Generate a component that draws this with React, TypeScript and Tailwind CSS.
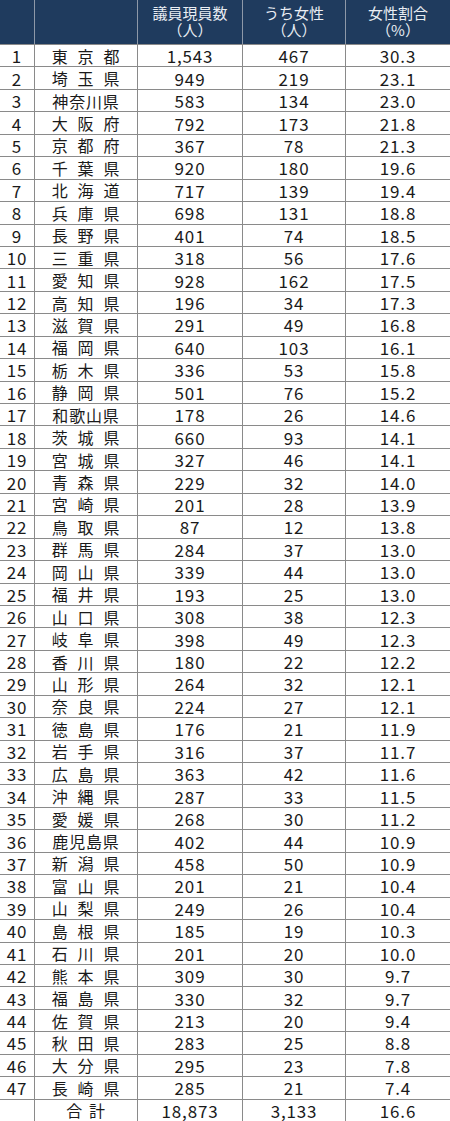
import React from "react"

type Row = [number, string, string, string, string]

const rows: Row[] = [
    [1, "東京都", "1,543", "467", "30.3"],
    [2, "埼玉県", "949", "219", "23.1"],
    [3, "神奈川県", "583", "134", "23.0"],
    [4, "大阪府", "792", "173", "21.8"],
    [5, "京都府", "367", "78", "21.3"],
    [6, "千葉県", "920", "180", "19.6"],
    [7, "北海道", "717", "139", "19.4"],
    [8, "兵庫県", "698", "131", "18.8"],
    [9, "長野県", "401", "74", "18.5"],
    [10, "三重県", "318", "56", "17.6"],
    [11, "愛知県", "928", "162", "17.5"],
    [12, "高知県", "196", "34", "17.3"],
    [13, "滋賀県", "291", "49", "16.8"],
    [14, "福岡県", "640", "103", "16.1"],
    [15, "栃木県", "336", "53", "15.8"],
    [16, "静岡県", "501", "76", "15.2"],
    [17, "和歌山県", "178", "26", "14.6"],
    [18, "茨城県", "660", "93", "14.1"],
    [19, "宮城県", "327", "46", "14.1"],
    [20, "青森県", "229", "32", "14.0"],
    [21, "宮崎県", "201", "28", "13.9"],
    [22, "鳥取県", "87", "12", "13.8"],
    [23, "群馬県", "284", "37", "13.0"],
    [24, "岡山県", "339", "44", "13.0"],
    [25, "福井県", "193", "25", "13.0"],
    [26, "山口県", "308", "38", "12.3"],
    [27, "岐阜県", "398", "49", "12.3"],
    [28, "香川県", "180", "22", "12.2"],
    [29, "山形県", "264", "32", "12.1"],
    [30, "奈良県", "224", "27", "12.1"],
    [31, "徳島県", "176", "21", "11.9"],
    [32, "岩手県", "316", "37", "11.7"],
    [33, "広島県", "363", "42", "11.6"],
    [34, "沖縄県", "287", "33", "11.5"],
    [35, "愛媛県", "268", "30", "11.2"],
    [36, "鹿児島県", "402", "44", "10.9"],
    [37, "新潟県", "458", "50", "10.9"],
    [38, "富山県", "201", "21", "10.4"],
    [39, "山梨県", "249", "26", "10.4"],
    [40, "島根県", "185", "19", "10.3"],
    [41, "石川県", "201", "20", "10.0"],
    [42, "熊本県", "309", "30", "9.7"],
    [43, "福島県", "330", "32", "9.7"],
    [44, "佐賀県", "213", "20", "9.4"],
    [45, "秋田県", "283", "25", "8.8"],
    [46, "大分県", "295", "23", "7.8"],
    [47, "長崎県", "285", "21", "7.4"],
]

const cols = "grid grid-cols-[35px_103px_105px_103px_104px]"

function Name({ text }: { text: string }) {
    const chars = Array.from(text)
    // 3-char names are spread out, 4-char names sit tight
    return (
        <div className={`flex justify-center ${chars.length === 3 ? "gap-[9px]" : chars.length === 2 ? "gap-[6px]" : "gap-0"}`}>
            {chars.map((c, i) => (
                <span key={i}>{c}</span>
            ))}
        </div>
    )
}

function HeaderCell({ top, bottom, last }: { top?: string; bottom?: string; last?: boolean }) {
    return (
        <div className={`flex flex-col items-center justify-center gap-[1px] pb-[2px] leading-[16px] ${last ? "" : "border-r border-[#8d98a8]"}`}>
            {top && <span>{top}</span>}
            {bottom && <span>{bottom}</span>}
        </div>
    )
}

function BodyRow({ rank, name, total, women, ratio }: { rank: string; name: string; total: string; women: string; ratio: string }) {
    const cell = "flex items-center justify-center border-r border-[#8a8a8a]"
    return (
        <div className={`${cols} h-[22.44px] shrink-0 leading-none border-t border-[#8a8a8a]`}>
            <div className={cell}>{rank}</div>
            <div className={`${cell} text-[16px]`}>
                <Name text={name} />
            </div>
            <div className={cell}>{total}</div>
            <div className={cell}>{women}</div>
            <div className="flex items-center justify-center">{ratio}</div>
        </div>
    )
}

export default function App() {
    return (
        <div
            className="w-[450px] h-[1121px] flex flex-col bg-white text-[#1a1a1a] text-[17px] tracking-[0.05em] overflow-hidden"
            style={{ fontFamily: '"Noto Sans CJK JP", "Noto Sans", sans-serif' }}
        >
            {/* Header */}
            <div className={`${cols} h-[44px] shrink-0 bg-[#1f3b5e] text-[#e9edf3] text-[15px] tracking-normal`}>
                <HeaderCell />
                <HeaderCell />
                <HeaderCell top="議員現員数" bottom="（人）" />
                <HeaderCell top="うち女性" bottom="（人）" />
                <HeaderCell top="女性割合" bottom="（%）" last />
            </div>

            {/* Rows */}
            {rows.map(([rank, name, total, women, ratio]) => (
                <BodyRow key={rank} rank={String(rank)} name={name} total={total} women={women} ratio={ratio} />
            ))}
            <BodyRow rank="" name="合計" total="18,873" women="3,133" ratio="16.6" />
        </div>
    )
}
